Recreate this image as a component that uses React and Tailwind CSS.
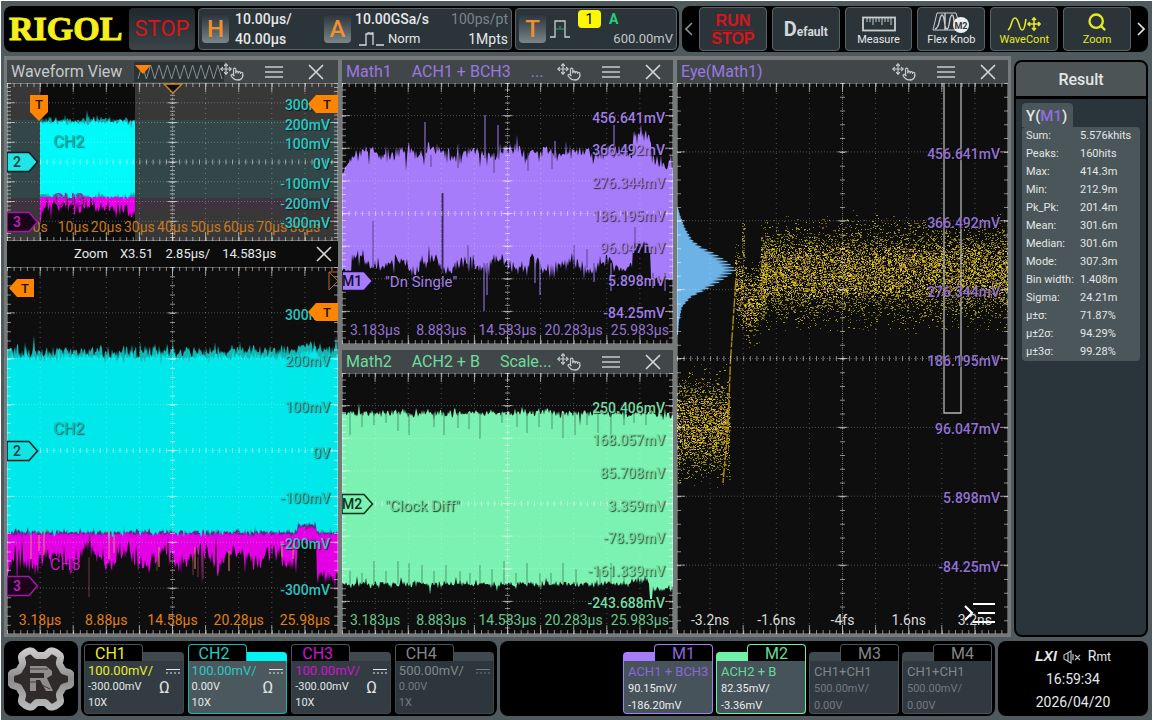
import React from 'react';
import { Move, Pointer, Search } from 'lucide-react';

// seeded so that the noise is the same on every render
function makeRandom(seed) {
  let s = seed;
  return () => {
    s = (s + 0x6d2b79f5) | 0;
    let t = Math.imul(s ^ (s >>> 15), 1 | s);
    t = (t + Math.imul(t ^ (t >>> 7), 61 | t)) ^ t;
    return ((t ^ (t >>> 14)) >>> 0) / 4294967296;
  };
}

function gauss(rnd) {
  return rnd() + rnd() + rnd() + rnd() - 2;
}

// gauss with an occasional long spike, the way trace edges look
function jag(rnd) {
  return gauss(rnd) * (rnd() < 0.15 ? 2.2 : 1);
}

// filled area between two edge functions, one point per column
function band(from, to, topAt, bottomAt) {
  const top = [];
  const bottom = [];
  for (let x = from; x <= to; x++) {
    top.push(`${x},${topAt(x).toFixed(1)}`);
    bottom.unshift(`${x},${bottomAt(x).toFixed(1)}`);
  }
  return [...top, ...bottom].join(' ');
}

function spikes(list) {
  return list.map(([x, a, b]) => `M${x} ${a}V${b}`).join('');
}

const r1 = makeRandom(7);
const zoomHalo = band(0, 331, (x) => (x > 290 && x < 310 ? 78 : 84) + jag(r1) * 6, () => 272);
const zoomBody = band(0, 331, (x) => (x > 290 && x < 310 ? 86 : 90) + jag(r1) * 4, (x) => (x > 290 && x < 310 ? 257 : 265) + jag(r1) * 3);
const zoomCh3Edge = band(0, 331, (x) => (x > 290 && x < 310 ? 253 : 264) + jag(r1) * 3, () => 274);
const zoomCh3 = band(0, 331, (x) => (x > 290 && x < 310 ? 261 : 267) + gauss(r1) * 2,
  (x) => {
    if (x < 8) return 312 - x * 3 + gauss(r1) * 8;
    if (x >= 310) return 312 + jag(r1) * 9;
    if (x > 290) return 274 + gauss(r1) * 3;
    return 291 - Math.sin(x / 5.8) * 7 + jag(r1) * 10;
  });
const zoomFringe = spikes([[24, 268, 292], [32, 268, 284], [37, 262, 288], [102, 264, 292], [107, 268, 286], [152, 280, 300], [188, 280, 302], [222, 284, 304], [275, 274, 290], [286, 276, 292]]);
const zoomDrops = spikes([[82, 290, 330], [186, 290, 308], [191, 290, 310], [196, 286, 312], [150, 290, 304]]);

const r2 = makeRandom(21);
const viewHalo = band(33, 128, () => 37 + jag(r2) * 3, () => 114);
const viewBody = band(33, 128, () => 39 + jag(r2) * 3, () => 113 + jag(r2) * 3);
const viewCh3 = band(33, 128, () => 109 + gauss(r2) * 3, (x) => (x < 37 ? 139 - (x - 33) * 3 : x > 120 ? 132 : 124) + jag(r2) * 6);

const r3 = makeRandom(5);
const math1Wave = band(0, 331,
  (x) => {
    if (x < 14) return 89 - x * 1.4 + gauss(r3) * 4;
    if (x > 309) return 80 + jag(r3) * 6;
    if (x > 290) return 53 + jag(r3) * 8;
    return 70 + Math.sin(x / 5.6) * 3 + jag(r3) * 7;
  },
  (x) => {
    if (x < 10) return 188 + gauss(r3) * 3;
    if (x > 308) return 196 + gauss(r3) * 4;
    if (x > 290) return 164 + gauss(r3) * 6;
    return 182 - Math.cos((x - 18) / 5.6) * 5 + jag(r3) * 7;
  });
const math1Spikes = spikes([[83, 39, 75], [143, 32, 75], [156, 42, 75], [272, 42, 75], [213, 58, 75], [142, 180, 228], [145, 180, 212], [193, 180, 200], [198, 180, 212], [252, 180, 199], [269, 180, 208], [311, 190, 205], [323, 190, 208]]);
const math1Notches = spikes([[31, 138, 185], [89, 72, 84], [116, 72, 85], [126, 162, 185], [152, 70, 90], [186, 70, 88], [210, 70, 86], [232, 162, 185], [245, 166, 185], [293, 144, 165]]);

const r4 = makeRandom(99);
const math2Wave = band(0, 331,
  (x) => (x > 318 ? 43 : 40) + jag(r4) * 3.4,
  (x) => {
    if (x > 307 && x < 311) return 226;
    if (x >= 311) return 216 + jag(r4) * 3;
    if (x > 288) return 207 + jag(r4) * 4;
    return 211 + jag(r4) * 3.4;
  });
const math2Notches = spikes(
  [[8, 62], [20, 54], [32, 52], [44, 50], [56, 58], [67, 62], [92, 54], [102, 62], [116, 55], [127, 56], [138, 66], [160, 50], [175, 54], [185, 60], [197, 54], [210, 56], [221, 65], [233, 62], [245, 52], [256, 60], [269, 66], [282, 52], [292, 50], [304, 52]].map(([x, b]) => [x, 40, b])
    .concat([[8, 198], [20, 200], [32, 188], [44, 198], [56, 188], [67, 190], [80, 192], [92, 198], [104, 192], [118, 198], [128, 200], [138, 192], [150, 196], [162, 188], [174, 200], [185, 190], [198, 200], [209, 200], [221, 190], [234, 196], [258, 196], [269, 190], [282, 196]].map(([x, a]) => [x, a, 211]))
);

// eye diagram: low level, rising edge, overshoot dip, then the high level
const r5 = makeRandom(314);
const eyeDots = [[], [], [], []];
function eyeDot(x, y, spread) {
  const far = Math.abs(spread) > 0.75;
  const n = far ? (r5() < 0.6 ? 0 : 1) : Math.floor(r5() * 4);
  eyeDots[n].push(`M${Math.floor(x)} ${Math.floor(y)}.5h${r5() < 0.25 ? 2 : 1}`);
}
for (let i = 0; i < 2200; i++) {
  const g = gauss(r5);
  eyeDot(r5() * 53, 344 + g * 38, g);
}
for (let i = 0; i < 900; i++) {
  const x = 58 + r5() * 32;
  const g = gauss(r5);
  eyeDot(x, 190 + Math.sin(((x - 58) / 32) * Math.PI) * 32 + g * 30, g);
}
for (let i = 0; i < 8600; i++) {
  const g = gauss(r5);
  eyeDot(84 + r5() * 247, 189 + g * 34, g);
}
for (let i = 0; i < 700; i++) {
  eyeDot(84 + r5() * 247, 136 + r5() * 112, 1);
}
for (let i = 0; i < 60; i++) {
  eyeDot(65 + r5() * 3, 140 + r5() * 50, 1);
}
const eyeColors = ['#6e6612', '#a4981a', '#d8c81c', '#966a1e'];

const histShape = [[125, 1], [132, 3], [145, 8], [157, 15], [164, 24], [170, 36], [178, 48], [187, 57], [194, 48], [200, 40], [207, 28], [214, 14], [224, 5], [238, 2], [252, 1]];
const histPath = (() => {
  const pts = ['0,125'];
  for (let y = 125; y <= 252; y++) {
    const i = Math.max(1, histShape.findIndex((p) => p[0] >= y));
    const [y0, w0] = histShape[i - 1];
    const [y1, w1] = histShape[i];
    const w = w0 + ((w1 - w0) * (y - y0)) / (y1 - y0);
    pts.push(`${(w * (y % 3 ? 1.04 : 0.82)).toFixed(1)},${y}`);
  }
  pts.push('0,252');
  return pts.join(' ');
})();

const gearPath = (() => {
  const pts = [];
  for (let a = 0; a < 360; a += 3) {
    const t = (a * Math.PI) / 180;
    const r = 27 - 3.6 * Math.tanh(2.4 * Math.cos(6 * (t - Math.PI / 2)));
    pts.push(`${(33 + r * Math.cos(t)).toFixed(1)},${(33 + r * Math.sin(t)).toFixed(1)}`);
  }
  return pts.join(' ');
})();

const DIVS_X = [1, 2, 3, 4, 5, 6, 7, 8, 9];
const DIVS_Y = [1, 2, 3, 4, 5, 6, 7];

function Grid({ w, h }) {
  const sx = w / 50;
  const sy = h / 40;
  const hTicks = `1 ${sx - 1}`;
  const vTicks = `1 ${sy - 1}`;
  return (
    <g stroke="#fff" fill="none">
      {DIVS_X.map((i) => (
        <g key={i}>
          <path d={`M${(w * i) / 10} 0V${h}`} strokeOpacity="0.3" strokeDasharray="1 4" />
          <path d={`M${(w * i) / 10} 0v9M${(w * i) / 10} ${h - 9}v9`} strokeOpacity="0.55" />
        </g>
      ))}
      {DIVS_Y.map((i) => (
        <g key={i}>
          <path d={`M0 ${(h * i) / 8}H${w}`} strokeOpacity="0.28" strokeDasharray="1 2" />
          <path d={`M0 ${(h * i) / 8}h8M${w - 8} ${(h * i) / 8}h8M${w / 2 - 5} ${(h * i) / 8}h10`} strokeOpacity="0.55" />
        </g>
      ))}
      <g strokeOpacity="0.5" strokeWidth="5">
        <path d={`M0 ${h / 2}H${w}`} strokeDasharray={hTicks} />
        <path d={`M${w / 2} 0V${h}`} strokeDasharray={vTicks} />
      </g>
      <g strokeOpacity="0.5" strokeWidth="8">
        <path d={`M0 0H${w}M0 ${h}H${w}`} strokeDasharray={hTicks} />
        <path d={`M0 0V${h}M${w} 0V${h}`} strokeDasharray={vTicks} />
      </g>
      <path d={`M${w / 2} 0V${h}`} strokeOpacity="0.3" strokeDasharray="1 1" />
      <rect x="0" y="0" width={w} height={h} strokeOpacity="0.6" />
    </g>
  );
}

function Plot({ w, h, grow, yLabels, yClass, xLabels, xClass, children, overlay }) {
  return (
    <div className={`relative min-h-0 basis-0 overflow-hidden bg-[#0e0e0e] text-sm leading-4 ${grow}`}>
      <svg viewBox={`0 0 ${w} ${h}`} preserveAspectRatio="none" className="absolute inset-0 h-full w-full">
        {children}
        <Grid w={w} h={h} />
      </svg>
      {xLabels.map(([div, text]) => (
        <span key={text} className={`absolute bottom-1.5 -translate-x-1/2 whitespace-nowrap ${xClass}`} style={{ left: `${div * 10}%` }}>
          {text}
        </span>
      ))}
      {yLabels.map((text, i) => (
        <span key={text} className={`absolute right-2 -mt-1.5 font-medium [text-shadow:1px_1px_1px_#000a] ${yClass}`} style={{ top: `${(i + 1) * 12.5}%` }}>
          {text}
        </span>
      ))}
      {overlay}
    </div>
  );
}

function Flag({ text, fill, stroke, color, className }) {
  return (
    <svg width="32" height="22" viewBox="0 0 32 22" className={`absolute left-0 -translate-y-1/2 ${className}`}>
      <path d="M0 1.5H22L30.5 11L22 20.5H0Z" fill={fill} stroke={stroke} strokeWidth="1.5" />
      <text x="10" y="16" textAnchor="middle" fontSize="14" fontWeight="500" fill={color}>{text}</text>
    </svg>
  );
}

function TriggerTag({ className }) {
  return (
    <svg width="30" height="18" viewBox="0 0 30 18" className={`absolute ${className}`}>
      <path d="M0 9L8 0H30V18H8Z" fill="#ff8400" />
      <text x="19" y="14" textAnchor="middle" fontSize="13" fontWeight="500" fill="#1c1000">T</text>
    </svg>
  );
}

function CloseIcon() {
  return (
    <svg width="16" height="16" viewBox="0 0 16 16" stroke="#d6d8d9" strokeWidth="1.6">
      <path d="M1 1L15 15M15 1L1 15" />
    </svg>
  );
}

function TitleBar({ parts, color, pad = 'pr-3', children }) {
  return (
    <div className={`flex h-[23px] shrink-0 items-center bg-[#414749] pl-1 text-base leading-none ${pad} ${color}`}>
      <h2 className="flex min-w-0 flex-1 gap-5 overflow-hidden whitespace-pre leading-5">
        {parts.map((p) => <span key={p}>{p}</span>)}
      </h2>
      {children}
      <div className="flex shrink-0 items-center gap-[25px]">
        <button aria-label="Touch mode" className="-mr-1 flex items-start text-[#c8cbcc]">
          <Move size={12} strokeWidth={2.4} />
          <Pointer size={14} strokeWidth={2} className="-ml-0.5 mt-1" />
        </button>
        <button aria-label="Window menu">
          <svg width="18" height="12" viewBox="0 0 18 12" stroke="#c8cbcc" strokeWidth="1.5">
            <path d="M0 1H18M0 6H18M0 11H18" />
          </svg>
        </button>
        <button aria-label="Close window"><CloseIcon /></button>
      </div>
    </div>
  );
}

function LetterBox({ children }) {
  return (
    <span className="flex h-7 w-[27px] shrink-0 items-center justify-center rounded bg-linear-to-b from-[#2c363c] to-[#7b868b] text-2xl font-medium text-[#f0902c]">
      {children}
    </span>
  );
}

function ToolButton({ label, children, className }) {
  return (
    <button className={`flex h-11 flex-1 flex-col items-center justify-between rounded border border-[#596266] bg-[#2b3439] pb-1 pt-1 text-[11px] leading-3 ${className}`}>
      {children}
      {label && <span className="whitespace-nowrap">{label}</span>}
    </button>
  );
}

const channels = [
  { id: 'CH1', scale: '100.00mV/', offset: '-300.00mV', probe: '10X', ohm: true, color: 'text-[#e8ec2a]', tab: 'border-[#4a5357]', strip: 'bg-[#3f494d]', body: 'border-[#3f494d] bg-[#323c42] text-[#e3e6e7]' },
  { id: 'CH2', scale: '100.00mV/', offset: '0.00V', probe: '10X', ohm: true, color: 'text-[#28c9c2]', tab: 'border-[#22b3ae]', strip: 'bg-[#00f4f4]', body: 'border-[#22b3ae] bg-[#4b595e] text-[#e3e6e7]' },
  { id: 'CH3', scale: '100.00mV/', offset: '-300.00mV', probe: '10X', ohm: true, color: 'text-[#d014cf]', tab: 'border-[#4a5357]', strip: 'bg-[#3f494d]', body: 'border-[#3f494d] bg-[#323c42] text-[#e3e6e7]' },
  { id: 'CH4', scale: '500.00mV/', offset: '0.00V', probe: '1X', ohm: false, color: 'text-[#80888b]', tab: 'border-[#4a5357]', strip: 'bg-[#3f494d]', body: 'border-[#3f494d] bg-[#2c363c] text-[#737b7f]' },
];

const maths = [
  { id: 'M1', expr: 'ACH1 + BCH3', scale: '90.15mV/', offset: '-186.20mV', color: 'text-[#8b68d8]', tab: 'border-[#a67cfb]', strip: 'bg-[#a67cfb]', body: 'border-[#a67cfb] bg-[#46535a] text-[#eceeef]' },
  { id: 'M2', expr: 'ACH2 + B', scale: '82.35mV/', offset: '-3.36mV', color: 'text-[#62dc98]', tab: 'border-[#6ff0a8]', strip: 'bg-[#6ff0a8]', body: 'border-[#6ff0a8] bg-[#46535a] text-[#eceeef]' },
  { id: 'M3', expr: 'CH1+CH1', scale: '500.00mV/', offset: '0.00V', color: 'text-[#80888b]', tab: 'border-[#4a5357]', strip: 'bg-[#3f494d]', body: 'border-[#4a5357] bg-[#2f393f] text-[#737b7f]' },
  { id: 'M4', expr: 'CH1+CH1', scale: '500.00mV/', offset: '0.00V', color: 'text-[#80888b]', tab: 'border-[#4a5357]', strip: 'bg-[#3f494d]', body: 'border-[#4a5357] bg-[#2f393f] text-[#737b7f]' },
];

const results = [
  ['Sum:', '5.576khits'],
  ['Peaks:', '160hits'],
  ['Max:', '414.3m'],
  ['Min:', '212.9m'],
  ['Pk_Pk:', '201.4m'],
  ['Mean:', '301.6m'],
  ['Median:', '301.6m'],
  ['Mode:', '307.3m'],
  ['Bin width:', '1.408m'],
  ['Sigma:', '24.21m'],
  ['µ±σ:', '71.87%'],
  ['µ±2σ:', '94.29%'],
  ['µ±3σ:', '99.28%'],
];

const mathTimes = [[1, '3.183µs'], [3, '8.883µs'], [5, '14.583µs'], [7, '20.283µs'], [9, '25.983µs']];
const chVolts = ['300mV', '200mV', '100mV', '0V', '-100mV', '-200mV', '-300mV'];
const math1Volts = ['456.641mV', '366.492mV', '276.344mV', '186.195mV', '96.047mV', '5.898mV', '-84.25mV'];
const math2Volts = ['250.406mV', '168.057mV', '85.708mV', '3.359mV', '-78.99mV', '-161.339mV', '-243.688mV'];

function ChannelCard({ ch }) {
  return (
    <button className="flex flex-1 flex-col text-left">
      <span className="flex h-[17px] w-full items-end">
        <span className={`h-[17px] w-[59px] rounded-t border border-b-0 bg-black pl-2.5 text-base leading-[18px] ${ch.tab} ${ch.color}`}>{ch.id}</span>
        <span className={`h-[9px] flex-1 rounded-tr ${ch.strip}`} />
      </span>
      <span className={`flex w-full flex-1 justify-between rounded-b border border-t-0 px-[3px] pt-0.5 text-[11px] leading-4 ${ch.body}`}>
        <span className="flex flex-col whitespace-nowrap">
          <span className={`text-[13px] ${ch.color}`}>{ch.scale}</span>
          <span>{ch.offset}</span>
          <span>{ch.probe}</span>
        </span>
        <span className="flex flex-col items-end gap-1.5 pt-1.5">
          <svg width="14" height="5" viewBox="0 0 14 5" stroke="currentColor">
            <path d="M0 .5H14" />
            <path d="M0 4H14" strokeDasharray="2 2" />
          </svg>
          {ch.ohm && <span className="pr-2.5 text-base leading-4">Ω</span>}
        </span>
      </span>
    </button>
  );
}

function MathCard({ m }) {
  return (
    <button className="flex w-[90px] flex-col text-left">
      <span className="flex h-[17px] w-full items-end">
        <span className={`h-[9px] flex-1 rounded-tl ${m.strip}`} />
        <span className={`h-[17px] w-[59px] rounded-t border border-b-0 bg-black text-center text-base leading-[18px] ${m.tab} ${m.color}`}>{m.id}</span>
      </span>
      <span className={`flex w-full flex-1 flex-col overflow-hidden whitespace-nowrap rounded-b border border-t-0 pl-1 pt-0.5 text-[11px] leading-[17px] ${m.body}`}>
        <span className={`text-[13px] ${m.color}`}>{m.expr}</span>
        <span>{m.scale}</span>
        <span>{m.offset}</span>
      </span>
    </button>
  );
}

function TopBar() {
  return (
    <header className="grid shrink-0 grid-cols-[675fr_466fr] gap-[3px]">
      <div className="flex gap-[3px] rounded-lg bg-black p-[2px] text-sm leading-5 text-[#e6e8e9]">
        <h1 className="flex w-[120px] shrink-0 items-center pl-[3px] font-['Liberation_Serif'] text-[34px] font-bold leading-none text-[#f6f01a] [-webkit-text-stroke:1px_#f6f01a]">
          RIGOL
        </h1>
        <button className="w-[66px] shrink-0 rounded bg-linear-to-b from-[#20282d] to-[#3a4449] text-[22px] text-[#d8161c]">STOP</button>
        <button className="flex flex-1 items-center rounded border border-[#596266] bg-[#2b3439] px-[3px] text-left">
          <LetterBox>H</LetterBox>
          <span className="flex flex-1 flex-col pl-1.5 font-medium">
            <span>10.00µs/</span>
            <span>40.00µs</span>
          </span>
          <LetterBox>A</LetterBox>
          <span className="grid w-[157px] shrink-0 grid-cols-[1fr_auto] pl-1">
            <span className="font-medium">10.00GSa/s</span>
            <span className="text-right text-[#7d8588]">100ps/pt</span>
            <span className="flex items-center gap-1 pl-1 text-[13px]">
              <svg width="25" height="14" viewBox="0 0 25 14" fill="none" stroke="#d6d9da" strokeWidth="1.3">
                <path d="M0 13H7V2H9V1H11V2H13V1H14V13M17 13H25" />
              </svg>
              Norm
            </span>
            <span className="text-right">1Mpts</span>
          </span>
        </button>
        <button className="flex w-[162px] shrink-0 items-center rounded border border-[#596266] bg-[#2b3439] px-[3px] text-left">
          <LetterBox>T</LetterBox>
          <svg width="20" height="18" viewBox="0 0 20 18" fill="none" className="ml-1">
            <path d="M0 17H5V1H15V17H20" stroke="#c9cdce" strokeWidth="1.3" />
            <path d="M6 9H14M10 6V9" stroke="#1f8a58" strokeWidth="1.5" />
          </svg>
          <span className="flex flex-1 flex-col">
            <span className="flex items-center gap-2 pl-2">
              <span className="w-[23px] rounded bg-[#fdf800] text-center leading-[18px] text-black">1</span>
              <span className="font-bold text-[#22d07a]">A</span>
            </span>
            <span className="text-right text-[13px] text-[#c3c7c9]">600.00mV</span>
          </span>
        </button>
      </div>

      <nav className="flex items-center gap-[5px] rounded-lg bg-black px-0.5 text-[#e6e8e9]">
        <button aria-label="Previous" className="flex w-2.5 justify-center">
          <svg width="8" height="14" viewBox="0 0 8 14" fill="none" stroke="#8d9395" strokeWidth="1.6"><path d="M7 1L1 7L7 13" /></svg>
        </button>
        <ToolButton className="font-['Liberation_Sans'] font-bold text-[#d3171c]">
          <span className="border-b border-[#a01418] px-1 text-base leading-[18px]">RUN</span>
          <span className="text-base leading-4">STOP</span>
        </ToolButton>
        <ToolButton>
          <span className="m-auto text-xs font-bold text-[#d5d8d9]"><span className="text-xl">D</span>efault</span>
        </ToolButton>
        <ToolButton label="Measure">
          <svg width="34" height="16" viewBox="0 0 34 16" fill="none" stroke="#c9cdce" className="mt-1">
            <rect x="1" y="1.5" width="32" height="13" strokeWidth="1.8" />
            <path d="M5 2V6M8 2V6M11 2V9M14 2V6M17 2V6M20 2V9M23 2V6M26 2V6M29 2V9" />
          </svg>
        </ToolButton>
        <ToolButton label="Flex Knob">
          <svg width="38" height="22" viewBox="0 0 38 22" fill="none" stroke="#c9cdce">
            <path d="M5 1H24L29 18H1Z" />
            <path d="M3 17C8 17 7 3 10 3S12 17 15 17 17 3 20 3 21 17 26 17M13 1V18" strokeWidth="1.4" />
            <circle cx="29" cy="13" r="8" fill="#eceeef" stroke="none" />
            <text x="29" y="16.5" textAnchor="middle" fontSize="9" fontWeight="700" fill="#30383c" stroke="none">M2</text>
          </svg>
        </ToolButton>
        <ToolButton label="WaveCont" className="text-[#e6ea24]">
          <svg width="34" height="16" viewBox="0 0 34 16" fill="none" stroke="#e6ea24" strokeWidth="1.6" className="mt-1">
            <path d="M1 14C5 12 4 2 8 2S12 14 15 14 18 8 19 3" />
            <path d="M27 2V14M21 8H33M25 4L27 2L29 4M25 12L27 14L29 12M23 6L21 8L23 10M31 6L33 8L31 10" />
          </svg>
        </ToolButton>
        <ToolButton label="Zoom" className="text-[#e6ea24]">
          <Search size={20} strokeWidth={2.8} />
        </ToolButton>
        <button aria-label="Next" className="flex w-2.5 justify-center">
          <svg width="8" height="14" viewBox="0 0 8 14" fill="none" stroke="#e6e8e9" strokeWidth="1.6"><path d="M1 1L7 7L1 13" /></svg>
        </button>
      </nav>
    </header>
  );
}

function WaveformWindow() {
  return (
    <section className="flex min-w-0 flex-1 flex-col">
      <TitleBar parts={['Waveform View']} color="text-[#c6c9ca]" pad="pr-3.5">
        <svg width="90" height="20" viewBox="0 0 90 20" className="-mr-1 shrink-0">
          <rect width="90" height="20" fill="#2c3335" />
          <path d={Array.from({ length: 21 }, (_, i) => `${i ? 'L' : 'M'}${4 + i * 4.2} ${i % 2 ? 3 : 17}`).join('')} fill="none" stroke="#899093" />
          <path d="M1 3H17L9 12Z" fill="#ff8400" />
        </svg>
      </TitleBar>
      <Plot
        w={331} h={158} grow="grow-[158]"
        yLabels={chVolts} yClass="text-[#24cbc8]"
        xLabels={[[1, '0s'], [2, '10µs'], [3, '20µs'], [4, '30µs'], [5, '40µs'], [6, '50µs'], [7, '60µs'], [8, '70µs'], [9, '80µs']]}
        xClass="text-[#c87a20]"
        overlay={
          <>
            <TriggerTag className="right-0 top-3" />
            <svg width="18" height="26" viewBox="0 0 18 26" className="absolute left-[7%] top-3">
              <path d="M0 0H18V17L9 26L0 17Z" fill="#ff8400" />
              <text x="9" y="14" textAnchor="middle" fontSize="13" fontWeight="500" fill="#1c1000">T</text>
            </svg>
            <svg width="20" height="11" viewBox="0 0 20 11" className="absolute left-1/2 top-0 -translate-x-1/2">
              <path d="M1 1H19L10 10Z" fill="#0e0e0e" stroke="#c8862c" strokeWidth="1.4" />
            </svg>
            <span className="absolute left-[14%] top-[32%] text-base leading-4 text-[#14b4b0] [text-shadow:1px_1px_1px_#0008]">CH2</span>
            <span className="absolute left-[14%] top-[69%] text-base leading-4 text-[#b81ab8] [text-shadow:1px_1px_1px_#0008]">CH3</span>
            <Flag text="2" fill="#22e4e4" stroke="#041c1c" color="#063a3a" className="top-1/2" />
            <Flag text="3" fill="#1a041a" stroke="#a814a8" color="#c022c0" className="top-[88%]" />
          </>
        }
      >
        <rect width="331" height="158" fill="#383838" />
        <rect y="37" width="331" height="78" fill="#344748" />
        <rect y="115" width="331" height="12" fill="#3f333d" />
        <rect x="33" width="95" height="158" fill="#0c0c0c" />
        <polygon points={viewCh3} fill="#e800e8" />
        <polygon points={viewHalo} fill="#0fa9a5" />
        <polygon points={viewBody} fill="#00fafa" />
      </Plot>
      <div className="flex h-[26px] shrink-0 items-center bg-[#0c0c0c] pl-[67px] pr-1.5 text-[13px] text-[#e6e8e9]">
        <p className="flex flex-1 gap-3 whitespace-nowrap">
          <span>Zoom</span><span>X3.51</span><span>2.85µs/</span><span>14.583µs</span>
        </p>
        <button aria-label="Close zoom"><CloseIcon /></button>
      </div>
      <Plot
        w={331} h={367} grow="grow-[367]"
        yLabels={chVolts} yClass="text-[#2cc4c2]"
        xLabels={[[1, '3.18µs'], [3, '8.88µs'], [5, '14.58µs'], [7, '20.28µs'], [9, '25.98µs']]}
        xClass="text-[#e08018]"
        overlay={
          <>
            <TriggerTag className="right-0 top-9" />
            <svg width="25" height="18" viewBox="0 0 25 18" className="absolute left-0.5 top-3">
              <path d="M0 9L8 0H25V18H8Z" fill="#ff8400" />
              <text x="16" y="14" textAnchor="middle" fontSize="13" fontWeight="500" fill="#1c1000">T</text>
            </svg>
            <svg width="10" height="20" viewBox="0 0 10 20" className="absolute right-0 top-1" fill="none" stroke="#b06a30">
              <path d="M10 0V1L1 1V19L10 10M1 1L10 10" />
            </svg>
            <span className="absolute left-[14%] top-[42%] text-base leading-4 text-[#1fbab6] [text-shadow:1px_1px_1px_#0009]">CH2</span>
            <span className="absolute left-[13%] top-[79%] text-base leading-4 text-[#c41cc4] [text-shadow:1px_1px_1px_#0009]">CH3</span>
            <Flag text="2" fill="#12e4e4" stroke="#041c1c" color="#063a3a" className="top-1/2" />
            <Flag text="3" fill="#1a041a" stroke="#a814a8" color="#c022c0" className="top-[87%]" />
          </>
        }
      >
        <polygon points={zoomHalo} fill="#12b6b2" />
        <polygon points={zoomCh3Edge} fill="#5a2a8a" />
        <polygon points={zoomCh3} fill="#e400e4" />
        <polygon points={zoomBody} fill="#00e8ea" />
        <path d={zoomFringe} stroke="#e08a70" />
        <path d={zoomDrops} stroke="#6a3a40" />
      </Plot>
    </section>
  );
}

function MathWindows() {
  return (
    <div className="flex min-w-0 flex-1 flex-col gap-1.5">
      <section className="flex flex-1 flex-col">
        <TitleBar parts={['Math1', 'ACH1 + BCH3', '...']} color="text-[#9a78e0]" />
        <Plot
          w={331} h={261} grow="grow"
          yLabels={math1Volts} yClass="text-[#a07ee6]"
          xLabels={mathTimes} xClass="text-[#9474d2]"
          overlay={
            <>
              <span className="absolute left-[13%] top-[73%] text-[15px] leading-4 text-[#a382ea] [text-shadow:1px_1px_1px_#000a]">"Dn Single"</span>
              <Flag text="M1" fill="#a67cfb" stroke="#160c28" color="#160c28" className="top-[76%]" />
            </>
          }
        >
          <polygon points={math1Wave} fill="#a67cfb" />
          <path d={math1Spikes} stroke="#6f58a8" strokeWidth="1.5" />
          <path d={math1Notches} stroke="#5c458c" />
          <path d="M100.5 110V190" stroke="#3c2c5c" strokeWidth="2" />
        </Plot>
      </section>
      <section className="flex flex-1 flex-col">
        <TitleBar parts={['Math2', 'ACH2 + B', 'Scale...']} color="text-[#6fdc9f]" />
        <Plot
          w={331} h={261} grow="grow"
          yLabels={math2Volts} yClass="text-[#74dca4]"
          xLabels={mathTimes} xClass="text-[#66c890]"
          overlay={
            <>
              <span className="absolute left-[13%] top-[48%] text-[15px] leading-4 text-[#6fd8a0] [text-shadow:1px_1px_1px_#000c]">"Clock Diff"</span>
              <Flag text="M2" fill="#7cf2b2" stroke="#08301c" color="#08301c" className="top-1/2" />
            </>
          }
        >
          <polygon points={math2Wave} fill="#7cf2b2" />
          <path d={math2Notches} stroke="#4a9a70" />
        </Plot>
      </section>
    </div>
  );
}

function EyeWindow() {
  return (
    <section className="flex min-w-0 flex-1 flex-col">
      <TitleBar parts={['Eye(Math1)']} color="text-[#9a78e0]" />
      <Plot
        w={331} h={551} grow="grow"
        yLabels={math1Volts} yClass="text-[#9272d6]"
        xLabels={[[1, '-3.2ns'], [3, '-1.6ns'], [5, '-4fs'], [7, '1.6ns'], [9, '3.2ns']]}
        xClass="text-[#d8dadb]"
        overlay={
          <button aria-label="Show menu" className="absolute bottom-2.5 right-3">
            <svg width="32" height="22" viewBox="0 0 32 22" fill="none" stroke="#fff" strokeWidth="2.2">
              <path d="M9 2H31M14 11H31M9 20H31" />
              <path d="M1 4L8 11L1 18" />
            </svg>
          </button>
        }
      >
        {eyeDots.map((d, i) => <path key={i} d={d.join('')} stroke={eyeColors[i]} />)}
        <path d="M46 400L51 345L53.5 277L56 240L59 195" fill="none" stroke="#b08a14" strokeWidth="1.4" strokeDasharray="5 1 9 2" />
        <polygon points={histPath} fill="#6cb2e6" />
        <path d="M267 0V330H284V0" fill="none" stroke="#b4b6b7" strokeWidth="1.3" />
      </Plot>
    </section>
  );
}

function ResultPanel() {
  return (
    <aside className="mt-1 flex w-[134px] shrink-0 flex-col rounded-lg border-2 border-black bg-[#29343b] text-[#e3e6e7]">
      <h2 className="rounded-t-md border-b-[3px] border-black bg-[#4c5456] pt-0.5 text-center text-base font-medium leading-8">Result</h2>
      <div className="px-1.5 pt-1">
        <h3 className="w-[51px] rounded-t bg-[#4a5659] pl-1 pt-0.5 text-[15px] font-medium leading-[22px]">
          Y(<span className="text-[#9070e0]">M1</span>)
        </h3>
        <table className="w-full table-fixed rounded bg-[#4a5659] text-[11px] leading-[18px]">
          <tbody>
            {results.map(([name, value]) => (
              <tr key={name}>
                <th scope="row" className="w-[58px] whitespace-nowrap pl-1 text-left font-normal">{name}</th>
                <td className="whitespace-nowrap">{value}</td>
              </tr>
            ))}
          </tbody>
        </table>
      </div>
    </aside>
  );
}

function BottomBar() {
  return (
    <footer className="flex h-[75px] shrink-0 gap-[3px]">
      <button aria-label="Start menu" className="flex w-[74px] shrink-0 items-center justify-center rounded-lg bg-black">
        <svg width="66" height="66" viewBox="0 0 66 66">
          <defs>
            <linearGradient id="steel" x1="0" y1="0" x2="0" y2="1">
              <stop offset="0" stopColor="#c9c9c9" />
              <stop offset="0.5" stopColor="#8c8c8c" />
              <stop offset="1" stopColor="#b9b9b9" />
            </linearGradient>
          </defs>
          <polygon points={gearPath} fill="#2e2b2a" stroke="url(#steel)" strokeWidth="7" strokeLinejoin="round" />
          <path d="M22 20H38L44 25V29L39 32L45 45H38L32 34H28V45H22V32H36V27H22Z" fill="#8f8d8b" />
          <path d="M22 23H40M22 36H30M34 39L42 43" stroke="#3c3a39" />
        </svg>
      </button>
      <div className="flex flex-[415] gap-1 rounded-lg bg-black px-[3px] pb-0.5 pt-[3px]">
        {channels.map((ch) => <ChannelCard key={ch.id} ch={ch} />)}
      </div>
      <div className="flex flex-[494] justify-end gap-[3px] rounded-lg bg-black px-[3px] pb-0.5 pt-[3px]">
        {maths.map((m) => <MathCard key={m.id} m={m} />)}
      </div>
      <div className="flex w-[150px] shrink-0 flex-col items-center rounded-lg bg-black pt-1 text-sm leading-[23px] text-[#e6e8e9]">
        <div className="flex items-center gap-1.5">
          <span className="font-['Liberation_Sans'] font-bold italic">LXI</span>
          <svg width="19" height="14" viewBox="0 0 19 14" fill="none" stroke="#b9bdbe" strokeWidth="1.2">
            <path d="M1 5V9L8 13V1ZM5 3V11" />
            <path d="M10 4V10M12 5L17 10M17 5L12 10" />
          </svg>
          <span>R<span className="text-xs">mt</span></span>
        </div>
        <time>16:59:34</time>
        <time>2026/04/20</time>
      </div>
    </footer>
  );
}

function App() {
  return (
    <div className="flex min-h-screen flex-col gap-1 border-x border-t border-white bg-[#4f5a5e] pb-1 pl-[3px] pr-1 pt-[5px] font-['Roboto',sans-serif]">
      <TopBar />
      <main className="flex flex-1 gap-[3px]">
        <div className="flex min-w-0 flex-1 gap-1 bg-[#777a7a] px-[3px] pb-[3px] pt-1">
          <WaveformWindow />
          <MathWindows />
          <EyeWindow />
        </div>
        <ResultPanel />
      </main>
      <BottomBar />
    </div>
  );
}

export default App;
